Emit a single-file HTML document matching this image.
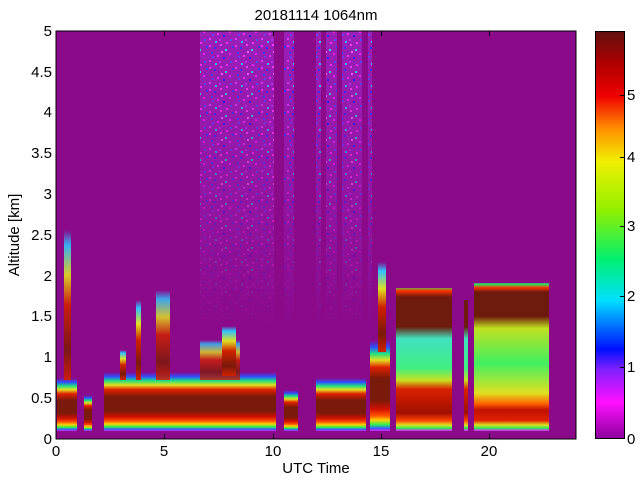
<!DOCTYPE html>
<html><head><style>
html,body{margin:0;padding:0;background:#fff;width:640px;height:480px;overflow:hidden}
svg{display:block;font-family:"Liberation Sans",sans-serif}
</style></head><body>
<svg width="640" height="480" viewBox="0 0 640 480">
<defs>
<pattern id="nz" width="26" height="22" patternUnits="userSpaceOnUse">
<rect width="26" height="22" fill="#9a20b8"/>
<rect x="1" y="1" width="2" height="2" fill="#ff30ff"/><rect x="6" y="3" width="2" height="2" fill="#3030ff"/>
<rect x="12" y="0" width="2" height="2" fill="#ff40ff"/><rect x="17" y="5" width="2" height="2" fill="#20e0e0"/>
<rect x="3" y="8" width="2" height="2" fill="#4040ff"/><rect x="9" y="11" width="2" height="2" fill="#ff30ff"/>
<rect x="15" y="13" width="2" height="2" fill="#2020ff"/><rect x="21" y="9" width="2" height="2" fill="#ff20ff"/>
<rect x="1" y="16" width="2" height="2" fill="#e040ff"/><rect x="7" y="19" width="2" height="2" fill="#30c0ff"/>
<rect x="22" y="17" width="2" height="2" fill="#5050ff"/><rect x="13" y="7" width="2" height="2" fill="#ff60ff"/>
<rect x="18" y="20" width="2" height="2" fill="#ff30ff"/><rect x="4" y="12" width="2" height="2" fill="#6a40ff"/>
<rect x="24" y="2" width="2" height="2" fill="#3040ff"/><rect x="11" y="17" width="2" height="2" fill="#c030ff"/>
</pattern>
<linearGradient id="nf" x1="0" y1="31" x2="0" y2="330" gradientUnits="userSpaceOnUse">
<stop offset="0" stop-color="#fff" stop-opacity="1"/><stop offset="0.6" stop-color="#fff" stop-opacity="0.5"/><stop offset="1" stop-color="#fff" stop-opacity="0"/>
</linearGradient>
<mask id="nm"><rect x="0" y="0" width="640" height="480" fill="url(#nf)"/></mask>
<linearGradient id="low" x1="0" y1="0" x2="0" y2="1">
<stop offset="0" stop-color="#8a0a8a"/><stop offset="0.08" stop-color="#3050ff"/><stop offset="0.15" stop-color="#20e080"/>
<stop offset="0.22" stop-color="#e0e020"/><stop offset="0.3" stop-color="#e02000"/><stop offset="0.42" stop-color="#7a1a0a"/>
<stop offset="0.66" stop-color="#7a1a0a"/><stop offset="0.76" stop-color="#d01000"/><stop offset="0.83" stop-color="#ff5000"/>
<stop offset="0.88" stop-color="#ffd000"/><stop offset="0.93" stop-color="#30f050"/><stop offset="0.97" stop-color="#3060ff"/>
<stop offset="1" stop-color="#e020ff"/>
</linearGradient>
<linearGradient id="spk" x1="0" y1="0" x2="0" y2="1">
<stop offset="0" stop-color="#8a0a8a"/><stop offset="0.1" stop-color="#30c0ff"/><stop offset="0.3" stop-color="#e0e020"/>
<stop offset="0.5" stop-color="#d02000"/><stop offset="0.8" stop-color="#7a1a0a"/><stop offset="1" stop-color="#d02000"/>
</linearGradient>
<linearGradient id="r1" x1="0" y1="282" x2="0" y2="431" gradientUnits="userSpaceOnUse">
<stop offset="0" stop-color="#8a0a8a"/><stop offset="0.03" stop-color="#30e060"/><stop offset="0.06" stop-color="#ff3000"/>
<stop offset="0.1" stop-color="#6e1a0c"/><stop offset="0.3" stop-color="#6e1a0c"/><stop offset="0.38" stop-color="#40e0c0"/>
<stop offset="0.58" stop-color="#40f080"/><stop offset="0.66" stop-color="#c8e020"/><stop offset="0.72" stop-color="#d82000"/>
<stop offset="0.88" stop-color="#a01000"/><stop offset="0.93" stop-color="#ff4000"/><stop offset="0.96" stop-color="#e0e020"/>
<stop offset="0.98" stop-color="#30f050"/><stop offset="1" stop-color="#e020ff"/>
</linearGradient>
<linearGradient id="r2" x1="0" y1="280" x2="0" y2="431" gradientUnits="userSpaceOnUse">
<stop offset="0" stop-color="#8a0a8a"/><stop offset="0.03" stop-color="#30e060"/><stop offset="0.05" stop-color="#ff3000"/>
<stop offset="0.08" stop-color="#6e1a0c"/><stop offset="0.24" stop-color="#6e1a0c"/><stop offset="0.32" stop-color="#c0e020"/>
<stop offset="0.55" stop-color="#40f060"/><stop offset="0.75" stop-color="#e0e020"/><stop offset="0.82" stop-color="#ff6000"/>
<stop offset="0.86" stop-color="#c01000"/><stop offset="0.93" stop-color="#e02000"/><stop offset="0.96" stop-color="#e0e020"/>
<stop offset="0.98" stop-color="#30f050"/><stop offset="1" stop-color="#e020ff"/>
</linearGradient>
<linearGradient id="cb" x1="0" y1="439" x2="0" y2="31" gradientUnits="userSpaceOnUse">
<stop offset="0" stop-color="#8a009a"/><stop offset="0.09" stop-color="#ff10ff"/><stop offset="0.17" stop-color="#8020ff"/>
<stop offset="0.22" stop-color="#0010ff"/><stop offset="0.34" stop-color="#00e0ff"/><stop offset="0.44" stop-color="#00f070"/>
<stop offset="0.56" stop-color="#90f000"/><stop offset="0.68" stop-color="#f0f000"/><stop offset="0.76" stop-color="#ff9000"/>
<stop offset="0.84" stop-color="#f00000"/><stop offset="0.92" stop-color="#b00000"/><stop offset="1" stop-color="#601010"/>
</linearGradient>
</defs>
<text x="316" y="20" font-size="15" text-anchor="middle">20181114 1064nm</text>
<rect x="56" y="31" width="520" height="408" fill="#8a0a8a"/>
<g mask="url(#nm)">
<rect x="200" y="31" width="74" height="300" fill="url(#nz)"/>
<rect x="284" y="31" width="10" height="300" fill="url(#nz)"/>
<rect x="316" y="31" width="5" height="300" fill="url(#nz)"/>
<rect x="326" y="31" width="11" height="300" fill="url(#nz)"/>
<rect x="342" y="31" width="20" height="300" fill="url(#nz)"/>
<rect x="368" y="31" width="4" height="300" fill="url(#nz)"/>
</g>
<g>
<rect x="57" y="378" width="20" height="53" fill="url(#low)"/>
<rect x="64" y="230" width="7" height="150" fill="url(#spk)" opacity="0.9"/>
<rect x="84" y="395" width="8" height="36" fill="url(#low)"/>
<rect x="104" y="372" width="172" height="59" fill="url(#low)"/>
<rect x="120" y="350" width="6" height="30" fill="url(#spk)"/>
<rect x="136" y="300" width="5" height="80" fill="url(#spk)"/>
<rect x="156" y="290" width="14" height="90" fill="url(#spk)" opacity="0.85"/>
<rect x="200" y="340" width="40" height="40" fill="url(#spk)" opacity="0.8"/>
<rect x="222" y="326" width="14" height="50" fill="url(#spk)"/>
<rect x="284" y="390" width="14" height="41" fill="url(#low)"/>
<rect x="316" y="378" width="50" height="53" fill="url(#low)"/>
<rect x="370" y="340" width="20" height="91" fill="url(#low)"/>
<rect x="378" y="262" width="8" height="90" fill="url(#spk)"/>
<rect x="396" y="288" width="56" height="143" fill="url(#r1)"/>
<rect x="464" y="300" width="4" height="131" fill="url(#r1)"/>
<rect x="474" y="283" width="75" height="148" fill="url(#r2)"/>
</g>
<rect x="56" y="31" width="520" height="408" fill="none" stroke="#000" stroke-width="1"/>
<g stroke="#000" stroke-width="1">
<line x1="164.5" y1="439" x2="164.5" y2="434"/><line x1="273.5" y1="439" x2="273.5" y2="434"/>
<line x1="381.5" y1="439" x2="381.5" y2="434"/><line x1="489.5" y1="439" x2="489.5" y2="434"/>
<line x1="164.5" y1="31" x2="164.5" y2="36"/><line x1="273.5" y1="31" x2="273.5" y2="36"/>
<line x1="381.5" y1="31" x2="381.5" y2="36"/><line x1="489.5" y1="31" x2="489.5" y2="36"/>
</g>
<g font-size="15" text-anchor="middle">
<text x="56" y="456">0</text><text x="164" y="456">5</text><text x="273" y="456">10</text>
<text x="381" y="456">15</text><text x="489" y="456">20</text>
<text x="316" y="473">UTC Time</text>
</g>
<g font-size="15" text-anchor="end">
<text x="52" y="444">0</text><text x="52" y="403">0.5</text><text x="52" y="362">1</text>
<text x="52" y="321">1.5</text><text x="52" y="281">2</text><text x="52" y="240">2.5</text>
<text x="52" y="199">3</text><text x="52" y="158">3.5</text><text x="52" y="117">4</text>
<text x="52" y="77">4.5</text><text x="52" y="36">5</text>
</g>
<text transform="translate(19,235) rotate(-90)" font-size="15" text-anchor="middle">Altitude [km]</text>
<rect x="595.5" y="31.5" width="29" height="407" fill="url(#cb)" stroke="#000"/>
<g stroke="#000"><line x1="620" y1="367.5" x2="624" y2="367.5"/><line x1="620" y1="296.5" x2="624" y2="296.5"/>
<line x1="620" y1="226.5" x2="624" y2="226.5"/><line x1="620" y1="157.5" x2="624" y2="157.5"/><line x1="620" y1="95.5" x2="624" y2="95.5"/></g>
<g font-size="15"><text x="627" y="444">0</text><text x="627" y="372">1</text><text x="627" y="301">2</text>
<text x="627" y="231">3</text><text x="627" y="162">4</text><text x="627" y="100">5</text></g>
</svg>
</body></html>
